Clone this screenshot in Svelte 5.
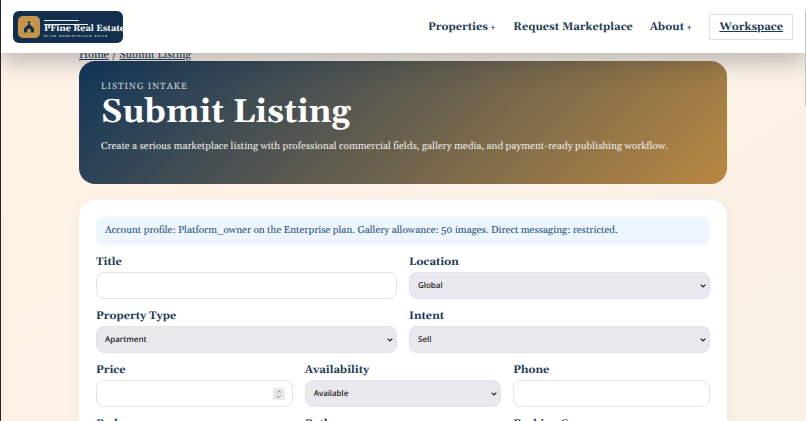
<script>
  const rows = [
    [
      { id: 'title', label: 'Title', type: 'text' },
      { id: 'location', label: 'Location', options: ['Global'] }
    ],
    [
      { id: 'property-type', label: 'Property Type', options: ['Apartment'] },
      { id: 'intent', label: 'Intent', options: ['Sell'] }
    ],
    [
      { id: 'price', label: 'Price', type: 'number' },
      { id: 'availability', label: 'Availability', options: ['Available'] },
      { id: 'phone', label: 'Phone', type: 'tel' }
    ],
    [
      { id: 'beds', label: 'Beds', type: 'number' },
      { id: 'baths', label: 'Baths', type: 'number' },
      { id: 'parking', label: 'Parking Spaces', type: 'number' }
    ]
  ];
</script>

<div class="page">
  <header>
    <a class="brand" href="#home" aria-label="PFine Real Estate home">
      <svg class="mark" viewBox="0 0 22 22" aria-hidden="true">
        <rect width="22" height="22" rx="5" fill="#c39549" />
        <path d="M11 5v4M9.5 6.4h3" stroke="#12304c" stroke-width="1.1" />
        <path d="M6 12.4 11 7.6l5 4.8v4.2h-3.2v-2.1a1.8 1.8 0 0 0-3.6 0v2.1H6z" fill="#12304c" />
      </svg>
      <span class="words">
        <svg class="rules" viewBox="0 0 44 6" aria-hidden="true">
          <path d="M0 1.5h35M0 5.5h44" stroke="#e9edf1" stroke-width="1" />
        </svg>
        <span class="name">PFine Real Estate</span>
        <span class="tag">ELITE MARKETPLACE SUITE</span>
      </span>
    </a>
    <nav>
      <a href="#properties">Properties<small>+</small></a>
      <a href="#requests">Request Marketplace</a>
      <a href="#about">About<small>+</small></a>
      <a class="workspace" href="#workspace">Workspace</a>
    </nav>
  </header>

  <main>
    <div class="crumbs"><a href="#home">Home</a> / <a href="#submit">Submit Listing</a></div>

    <section class="hero">
      <p class="eyebrow">LISTING INTAKE</p>
      <h1>Submit Listing</h1>
      <p class="lead">Create a serious marketplace listing with professional commercial fields, gallery media, and payment-ready publishing workflow.</p>
    </section>

    <form>
      <p class="notice">Account profile: Platform_owner on the Enterprise plan. Gallery allowance: 50 images. Direct messaging: restricted.</p>
      {#each rows as row}
        <div class="row">
          {#each row as field}
            <div class="field">
              <label for={field.id}>{field.label}</label>
              {#if field.options}
                <div class="select">
                  <select id={field.id}>
                    {#each field.options as option}<option>{option}</option>{/each}
                  </select>
                  <svg viewBox="0 0 6 4" aria-hidden="true"><path d="M.7.6 3 2.9 5.3.6" /></svg>
                </div>
              {:else if field.type === 'number'}
                <div class="number">
                  <input id={field.id} type="number" />
                  <svg viewBox="0 0 12 12" aria-hidden="true">
                    <rect width="12" height="12" />
                    <path d="M4 4.6 6 2.6l2 2M4 7.6l2 2 2-2" />
                  </svg>
                </div>
              {:else}
                <input id={field.id} type={field.type} />
              {/if}
            </div>
          {/each}
        </div>
      {/each}
    </form>
  </main>
  <span class="thumb"></span>
</div>

<style>
  :global(body) {
    margin: 0;
  }
  .page {
    position: relative;
    box-sizing: border-box;
    height: 100vh;
    overflow: hidden;
    border-left: 1px solid #29222a;
    background: linear-gradient(145deg, #fff2e6 0%, #fdf2e5 45%, #f8f1e4 100%);
    color: #1d3a54;
    font-family: Georgia, Gelasio, 'Liberation Serif', serif;
    font-size: 11px;
    line-height: 16px;
    text-rendering: geometricPrecision;
  }
  a {
    color: inherit;
  }
  header {
    position: relative;
    z-index: 1;
    display: flex;
    align-items: center;
    justify-content: space-between;
    box-sizing: border-box;
    height: 53px;
    padding: 0 13px 0 12px;
    background: #fffffe;
    box-shadow: 0 8px 24px rgba(20, 35, 55, 0.3);
  }
  .brand {
    display: flex;
    align-items: center;
    gap: 4px;
    box-sizing: border-box;
    width: 110px;
    height: 32px;
    padding-left: 5px;
    overflow: hidden;
    border-radius: 6px;
    background: #12304c;
    color: #fff;
    text-decoration: none;
    white-space: nowrap;
  }
  .mark {
    flex: none;
    width: 22px;
    height: 22px;
  }
  .words {
    display: flex;
    flex-direction: column;
    padding-top: 3px;
  }
  .rules {
    width: 44px;
    height: 6px;
  }
  .name {
    font-size: 9px;
    font-weight: 700;
    line-height: 9px;
  }
  .tag {
    font-family: 'Liberation Sans', sans-serif;
    font-size: 3px;
    letter-spacing: 1px;
    line-height: 4px;
  }
  nav {
    display: flex;
    align-items: center;
    gap: 17px;
    font-weight: 700;
  }
  nav a {
    text-decoration: none;
  }
  nav small {
    margin-left: 2px;
    font-size: 9px;
    line-height: 1;
  }
  nav .workspace {
    padding: 4px 9px;
    border: 1px solid #dde1e6;
    text-decoration: underline;
  }
  main {
    margin-top: -6px;
    padding: 0 79px 0 78px;
  }
  .crumbs {
    height: 14px;
  }
  .hero {
    box-sizing: border-box;
    min-height: 123px;
    padding: 19px 22px;
    border-radius: 16px;
    background: linear-gradient(135deg, #12365a 0%, #b98841 100%);
    color: #fff;
  }
  p,
  h1 {
    margin: 0;
  }
  .eyebrow {
    color: #d5d9da;
    font-size: 9px;
    letter-spacing: 1px;
  }
  h1 {
    font-size: 33px;
    line-height: 34px;
  }
  .lead {
    margin-top: 9px;
    color: #f1efeb;
    font-size: 10px;
  }
  form {
    margin-top: 16px;
    padding: 17px;
    border-radius: 16px;
    background: #fff;
    box-shadow: 0 4px 16px rgba(80, 60, 30, 0.05);
  }
  .notice {
    padding: 6px 9px;
    border-radius: 8px;
    background: #edf5ff;
    color: #254f7a;
    font-size: 10px;
  }
  .row {
    display: flex;
    gap: 12px;
    margin-top: 9px;
  }
  .field {
    display: flex;
    flex: 1 1 0;
    flex-direction: column;
    gap: 2px;
    min-width: 0;
  }
  label {
    font-weight: 700;
  }
  input,
  select {
    display: block;
    box-sizing: border-box;
    width: 100%;
    height: 27px;
    margin: 0;
    padding: 0 8px;
    border: 1px solid #dfe3ea;
    border-radius: 8px;
    background: #fff;
    color: #111;
    font-family: 'Noto Sans', sans-serif;
    font-size: 8px;
    font-weight: 500;
    text-rendering: geometricPrecision;
  }
  select {
    appearance: none;
    background: #e9e9ed;
  }
  input[type='number'] {
    appearance: textfield;
  }
  .select,
  .number {
    position: relative;
  }
  .select svg,
  .number svg {
    position: absolute;
    fill: none;
    pointer-events: none;
  }
  .select svg {
    top: 12px;
    right: 4px;
    width: 6px;
    height: 4px;
    stroke: #222;
    stroke-width: 1.2;
  }
  .number svg {
    top: 8px;
    right: 8px;
    width: 12px;
    height: 12px;
    stroke: #85858c;
  }
  .number rect {
    fill: #e9e9ed;
    stroke: none;
  }
  .thumb {
    position: absolute;
    z-index: 2;
    top: 11px;
    right: 0;
    width: 1px;
    height: 95px;
    background: #c4c2c0;
  }
</style>
